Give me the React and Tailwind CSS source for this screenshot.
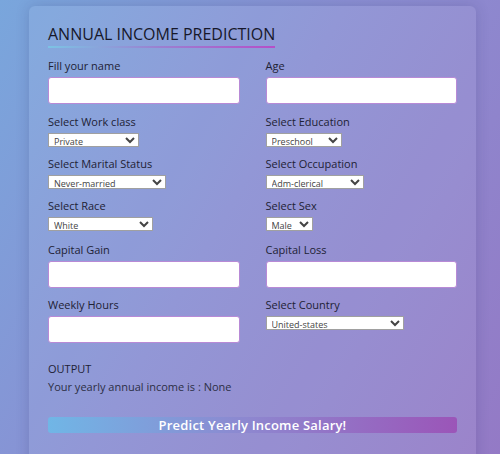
import { useState } from "react";

const workClasses = ["Private", "Self-emp-not-inc", "Self-emp-inc", "Federal-gov", "Local-gov", "State-gov"];
const educations = ["Preschool", "Bachelors", "HS-grad", "Masters", "Doctorate"];
const maritals = ["Never-married", "Married-civ-spouse", "Divorced", "Separated", "Widowed"];
const occupations = ["Adm-clerical", "Tech-support", "Craft-repair", "Sales", "Exec-managerial"];
const races = ["White", "Asian-Pac-Islander", "Amer-Indian-Eskimo", "Other", "Black"];
const sexes = ["Male", "Female"];
const countries = ["United-states", "Cambodia", "England", "Puerto-Rico", "Canada"];

function Label({ children }) {
  return <label className="block text-[11px] leading-[14px] font-medium text-[#1e2235] mb-1">{children}</label>;
}

function TextField({ label, className = "" }) {
  return (
    <div className={className}>
      <Label>{label}</Label>
      <input type="text" className="block w-full h-[27px] bg-white border border-[#b88ad6] rounded-[3px] px-2 text-xs outline-none" />
    </div>
  );
}

function SelectField({ label, options, width }) {
  const [value, setValue] = useState(options[0]);
  return (
    <div>
      <Label>{label}</Label>
      <select
        value={value}
        onChange={(e) => setValue(e.target.value)}
        className={`block h-[14px] bg-white border border-[#a0a0a0] text-[9px] leading-[12px] text-[#444] pl-[1px] ${width}`}
      >
        {options.map((o) => (
          <option key={o}>{o}</option>
        ))}
      </select>
    </div>
  );
}

export default function App() {
  return (
    <div className="min-h-[454px] w-full overflow-hidden bg-[linear-gradient(120deg,#79a6dc_0%,#8a8fd3_45%,#9479c5_100%)] px-[29px] pt-[6px] font-['Open_Sans',sans-serif]">
      <div className="min-h-[470px] w-[447px] rounded-md bg-white/[0.07] shadow-[0_0_14px_rgba(40,40,90,0.18)] px-[19px] pt-[16px]">
        <div className="inline-block">
          <h1 className="text-[16px] leading-[22px] text-[#17182a]">ANNUAL INCOME PREDICTION</h1>
          <div className="h-[2px] mt-[1px] bg-[linear-gradient(90deg,#7cc3e4,#9b7fd0_50%,#b54fc8)]" />
        </div>

        <div className="grid grid-cols-2 gap-x-[26px] gap-y-[10px] mt-[11px]">
          <TextField label="Fill your name" className="mb-[1px]" />
          <TextField label="Age" className="mb-[1px]" />
          <SelectField label="Select Work class" options={workClasses} width="w-[91px]" />
          <SelectField label="Select Education" options={educations} width="w-[76px]" />
          <SelectField label="Select Marital Status" options={maritals} width="w-[118px]" />
          <SelectField label="Select Occupation" options={occupations} width="w-[98px]" />
          <SelectField label="Select Race" options={races} width="w-[105px]" />
          <SelectField label="Select Sex" options={sexes} width="w-[47px]" />
          <TextField label="Capital Gain" className="pt-[2px]" />
          <TextField label="Capital Loss" className="pt-[2px]" />
          <TextField label="Weekly Hours" />
          <SelectField label="Select Country" options={countries} width="w-[138px]" />
        </div>

        <div className="mt-[19px] text-[11px] leading-[14px] text-[#1e2235]">OUTPUT</div>
        <div className="mt-[4px] text-[11px] leading-[14px] text-[#2c2f45]">Your yearly annual income is : None</div>

        <button className="mt-[23px] w-full h-[16px] rounded-[3px] bg-[linear-gradient(90deg,#70b6e6,#8e86cf_50%,#9b55b8)] text-white text-[13px] leading-[16px] font-semibold tracking-[0.2px]">
          Predict Yearly Income Salary!
        </button>
      </div>
    </div>
  );
}
